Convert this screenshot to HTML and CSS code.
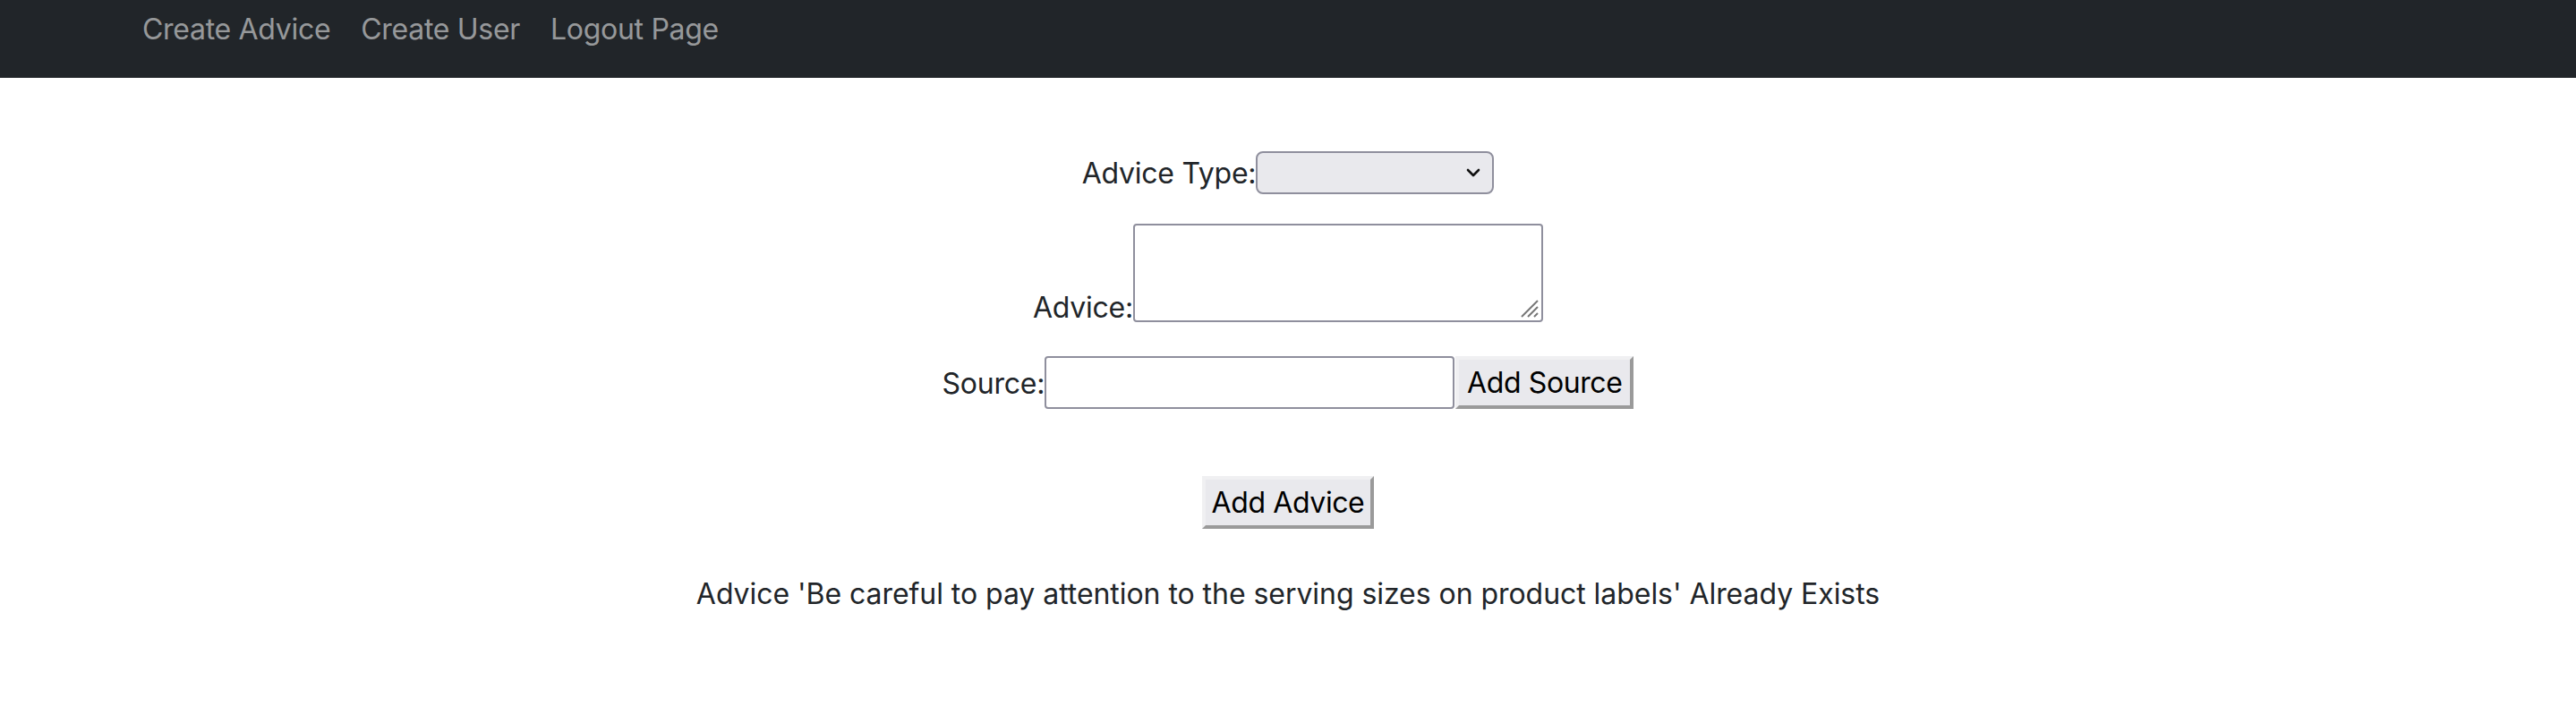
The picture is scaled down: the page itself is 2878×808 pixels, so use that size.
FILE: index.html
```html
<!DOCTYPE html>
<html lang="en">
<head>
<meta charset="utf-8">
<title>Create Advice</title>
<link rel="stylesheet" href="styles.css">
</head>
<body>
<nav class="navbar">
  <a class="nav-link" href="#">Create Advice</a>
  <a class="nav-link" href="#">Create User</a>
  <a class="nav-link" href="#">Logout Page</a>
</nav>
<main class="content">
  <form class="advice-form">
    <div class="row row-type">
      <label class="label" for="type">Advice Type:</label>
      <span class="select-wrap">
        <select id="type" class="select"></select>
        <svg class="chevron" width="16" height="10" viewBox="0 0 16 10"><path d="M2 2 L8 8 L14 2" fill="none" stroke="#111" stroke-width="2.6" stroke-linecap="round" stroke-linejoin="round"/></svg>
      </span>
    </div>
    <div class="row row-advice">
      <label class="label label-low" for="advice">Advice:</label>
      <span class="textarea-wrap">
        <textarea id="advice" class="textarea"></textarea>
        <svg class="grip" width="24" height="24" viewBox="0 0 24 24"><path d="M22 4 L4 22 M22 11 L11 22 M22 18 L18 22" stroke="#777" stroke-width="2" fill="none"/></svg>
      </span>
    </div>
    <div class="row row-source">
      <label class="label" for="source">Source:</label>
      <input id="source" class="input" type="text">
      <button type="button" class="btn btn-source">Add Source</button>
    </div>
    <div class="row row-submit">
      <button type="button" class="btn">Add Advice</button>
    </div>
  </form>
  <p class="message">Advice 'Be careful to pay attention to the serving sizes on product labels' Already Exists</p>
</main>
</body>
</html>
```
FILE: styles.css
```css
html, body {
  margin: 0;
  padding: 0;
  background: #fff;
}
body {
  font-family: Inter, "Noto Sans", "Liberation Sans", sans-serif;
  color: #212529;
  font-size: 32px;
}
.navbar {
  background: #212529;
  height: 87px;
  box-sizing: border-box;
  display: flex;
  align-items: flex-start;
  padding: 9px 0 0 142px;
}
.nav-link {
  color: rgba(255, 255, 255, 0.55);
  text-decoration: none;
  line-height: 48px;
  padding: 0 17px;
  letter-spacing: -0.3px;
}
.content {
  display: flex;
  flex-direction: column;
  align-items: center;
}
.advice-form {
  display: flex;
  flex-direction: column;
  align-items: center;
  margin-top: 82px;
}
.row {
  display: flex;
  justify-content: center;
}
.row-type {
  align-items: center;
  height: 48px;
}
.row-advice {
  align-items: flex-end;
  margin-top: 33px;
}
.row-source {
  align-items: center;
  margin-top: 38px;
}
.row-submit {
  margin-top: 75px;
}
.label {
  line-height: 48px;
  margin-top: 2px;
  letter-spacing: -0.25px;
}
.label-low {
  line-height: 32px;
  margin-top: 0;
}
.select-wrap, .textarea-wrap {
  position: relative;
  display: block;
}
.select {
  appearance: none;
  -webkit-appearance: none;
  display: block;
  width: 266px;
  height: 48px;
  box-sizing: border-box;
  background: #e9e9ed;
  border: 2px solid #8f8f9d;
  border-radius: 8px;
  margin: 0;
  font: inherit;
}
.chevron {
  position: absolute;
  right: 15px;
  top: 19px;
}
.textarea {
  display: block;
  width: 458px;
  height: 110px;
  box-sizing: border-box;
  border: 2px solid #8f8f9d;
  border-radius: 4px;
  margin: 0;
  resize: none;
  background: #fff;
  font: inherit;
}
.grip {
  position: absolute;
  right: 4px;
  bottom: 4px;
}
.input {
  display: block;
  width: 458px;
  height: 59px;
  box-sizing: border-box;
  border: 2px solid #8f8f9d;
  border-radius: 4px;
  margin: 0;
  background: #fff;
  font: inherit;
}
.btn {
  font-family: Inter, "Noto Sans", "Liberation Sans", sans-serif;
  font-size: 32px;
  line-height: 38px;
  letter-spacing: -0.4px;
  color: #000;
  background: #e9e9ed;
  border: 4px solid;
  border-color: #f0f0f2 #9a9a9a #9a9a9a #f0f0f2;
  height: 59px;
  box-sizing: border-box;
  padding: 0 7px;
  margin: 0;
  border-radius: 0;
}
.btn-source {
  padding: 0 9px;
  margin-left: 1px;
}
.message {
  margin: 49px 0 0;
  line-height: 48px;
  letter-spacing: -0.05px;
}
```
